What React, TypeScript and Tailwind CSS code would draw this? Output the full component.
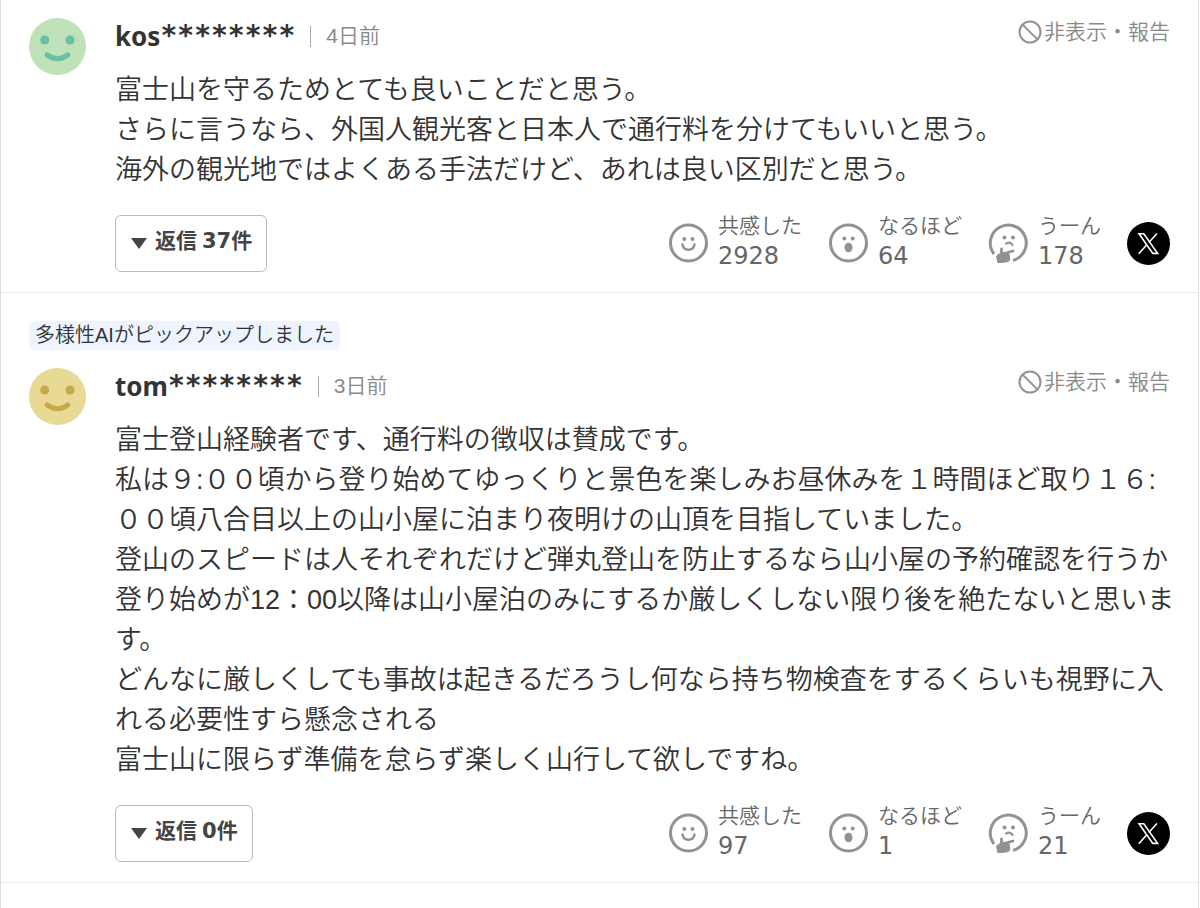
import type { ReactNode } from "react";

type Comment = {
  pickup?: string;
  name: string;
  mask: string;
  date: string;
  face: { base: string; mark: string };
  paragraphs: string[];
  replies: number;
  empathy: number;
  insight: number;
  doubt: number;
};

const comments: Comment[] = [
  {
    name: "kos",
    mask: "********",
    date: "4日前",
    face: { base: "#bfe2b8", mark: "#67bfa5" },
    paragraphs: [
      "富士山を守るためとても良いことだと思う。",
      "さらに言うなら、外国人観光客と日本人で通行料を分けてもいいと思う。",
      "海外の観光地ではよくある手法だけど、あれは良い区別だと思う。",
    ],
    replies: 37,
    empathy: 2928,
    insight: 64,
    doubt: 178,
  },
  {
    pickup: "多様性AIがピックアップしました",
    name: "tom",
    mask: "********",
    date: "3日前",
    face: { base: "#e8d995", mark: "#c4a94d" },
    paragraphs: [
      "富士登山経験者です、通行料の徴収は賛成です。",
      "私は９:００頃から登り始めてゆっくりと景色を楽しみお昼休みを１時間ほど取り１６:００頃八合目以上の山小屋に泊まり夜明けの山頂を目指していました。",
      "登山のスピードは人それぞれだけど弾丸登山を防止するなら山小屋の予約確認を行うか",
      "登り始めが12：00以降は山小屋泊のみにするか厳しくしない限り後を絶たないと思います。",
      "どんなに厳しくしても事故は起きるだろうし何なら持ち物検査をするくらいも視野に入れる必要性すら懸念される",
      "富士山に限らず準備を怠らず楽しく山行して欲しですね。",
    ],
    replies: 0,
    empathy: 97,
    insight: 1,
    doubt: 21,
  },
];

function Avatar({ base, mark }: { base: string; mark: string }) {
  return (
    <svg viewBox="0 0 57 57" className="size-[57px] shrink-0" aria-hidden="true">
      <circle cx="28.5" cy="28.5" r="28.5" fill={base} />
      <circle cx="15.7" cy="22" r="4.5" fill={mark} />
      <circle cx="41" cy="22" r="4.5" fill={mark} />
      <path d="M18.200 37Q28.500 44.500 38.800 37" fill="none" stroke={mark} strokeWidth="5" strokeLinecap="round" />
    </svg>
  );
}

function SmileIcon() {
  return (
    <svg viewBox="0 0 40 40" className="size-10 shrink-0" fill="none" stroke="#929292" aria-hidden="true">
      <circle cx="20.500" cy="20" r="18" strokeWidth="3" />
      <circle cx="16.300" cy="16" r="2" fill="#929292" stroke="none" />
      <circle cx="24.500" cy="16" r="2" fill="#929292" stroke="none" />
      <path d="M14.500 21.500c.6 3.600 3 5.200 6 5.200s5.400-1.600 6-5.200" strokeWidth="2.400" strokeLinecap="round" />
    </svg>
  );
}

function SurpriseIcon() {
  return (
    <svg viewBox="0 0 40 40" className="size-10 shrink-0" fill="#929292" aria-hidden="true">
      <circle cx="20.500" cy="20" r="18" fill="none" stroke="#929292" strokeWidth="3" />
      <circle cx="16.300" cy="15.500" r="2" />
      <circle cx="24.700" cy="15.500" r="2" />
      <ellipse cx="20.500" cy="24.500" rx="4" ry="4.800" />
    </svg>
  );
}

function ThinkIcon() {
  return (
    <svg viewBox="0 0 40 40" className="size-10 shrink-0" fill="none" stroke="#929292" aria-hidden="true">
      <path d="M6 31A18 18 0 1 1 25 37.400" strokeWidth="3" />
      <circle cx="16.500" cy="14.500" r="2" fill="#929292" stroke="none" />
      <circle cx="25" cy="14.500" r="2" fill="#929292" stroke="none" />
      <path d="M18 20.600c2.600-1.400 5.200-.8 6.600 1.400" strokeWidth="2.200" strokeLinecap="round" />
      <path d="M13.500 26v7M14 31l11-3" strokeWidth="2.800" strokeLinecap="round" />
      <path d="M8.500 33l3.500-2.500 5-1 4 1 .8 6-1.300 2-10.500 1.500z" fill="#929292" strokeWidth="1" strokeLinejoin="round" />
    </svg>
  );
}

function Reaction({ icon, label, count }: { icon: ReactNode; label: string; count: number }) {
  return (
    <button type="button" className="flex items-center gap-[10px] text-left">
      {icon}
      <span className="flex flex-col pb-[2px]">
        <span className="text-[21px] leading-7 font-[350] text-[#666]">{label}</span>
        <span className="font-['DejaVu_Sans'] text-[24px] leading-8 text-[#666]">{count}</span>
      </span>
    </button>
  );
}

function CommentItem({ comment }: { comment: Comment }) {
  return (
    <article className="border-b border-[#ebebeb] pt-[18px] pr-5 pb-[18px] pl-7">
      {comment.pickup && (
        <p className="mt-[10px] mb-[18px] w-fit rounded-md bg-[#edf4ff] px-[6px] text-[20px] leading-[29px] font-[350] text-[#333]">
          {comment.pickup}
        </p>
      )}
      <div className="flex gap-[29px]">
        <Avatar {...comment.face} />
        <div className="min-w-0 flex-1">
          <header className="flex h-[52px] items-start justify-between pr-2">
            <div className="flex items-center">
              <h2 className="flex items-center leading-9 font-bold text-[#333]">
                <span className="font-['Noto_Sans'] text-[26px]">{comment.name}</span>
                <span className="font-['DejaVu_Sans_Mono'] text-[28px]">{comment.mask}</span>
              </h2>
              <span className="ml-[15px] h-[21px] w-px bg-[#aaa]" />
              <time className="ml-[15px] text-[21px] leading-9 font-[350] text-[#888]">{comment.date}</time>
            </div>
            <button type="button" className="flex items-start gap-[2px] text-[21px] leading-7 font-[350] text-[#888]">
              <svg viewBox="0 0 24 24" className="mt-[2px] size-6" fill="none" stroke="#929292" strokeWidth="2" aria-hidden="true">
                <circle cx="12" cy="12" r="10.500" />
                <path d="M4.600 4.600l14.800 14.800" />
              </svg>
              <span>非表示・報告</span>
            </button>
          </header>
          <div className="text-[27px] leading-10 font-[350] text-[#333]">
            {comment.paragraphs.map((text) => (
              <p key={text}>{text}</p>
            ))}
          </div>
          <footer className="mt-[22px] flex flex-wrap items-center justify-between gap-4 pr-2">
            <button
              type="button"
              className="flex h-[57px] items-center gap-2 rounded-md border border-[#bbb] pr-[14px] pl-[15px] font-['DejaVu_Sans','Noto_Sans_CJK_JP',sans-serif] text-[21px] font-bold text-[#444]"
            >
              <svg viewBox="0 0 16 11" className="h-[11px] w-4" fill="#444" aria-hidden="true">
                <path d="M0 0h16L8 11z" />
              </svg>
              <span className="flex gap-[5px] pb-[2px]">
                <span>返信</span>
                <span>{comment.replies}件</span>
              </span>
            </button>
            <div className="flex flex-wrap items-center gap-[26px]">
              <Reaction icon={<SmileIcon />} label="共感した" count={comment.empathy} />
              <Reaction icon={<SurpriseIcon />} label="なるほど" count={comment.insight} />
              <Reaction icon={<ThinkIcon />} label="うーん" count={comment.doubt} />
              <a href="#share" aria-label="Xでシェア">
                <svg viewBox="0 0 43 43" className="size-[43px]" aria-hidden="true">
                  <circle cx="21.500" cy="21.500" r="21.500" fill="#000" />
                  <g fill="none" stroke="#fff" strokeWidth="1.600">
                    <path d="M12 11.800h4.800l13.800 19.600h-4.800z" />
                    <path d="M30 11.500l-8.200 9M19.800 22.800l-8 9" />
                  </g>
                </svg>
              </a>
            </div>
          </footer>
        </div>
      </div>
    </article>
  );
}

export default function App() {
  return (
    <main className="mr-px min-h-screen border-x border-[#ddd] bg-white font-['Liberation_Sans','Noto_Sans_CJK_JP',sans-serif]">
      {comments.map((comment) => (
        <CommentItem key={comment.name} comment={comment} />
      ))}
    </main>
  );
}
